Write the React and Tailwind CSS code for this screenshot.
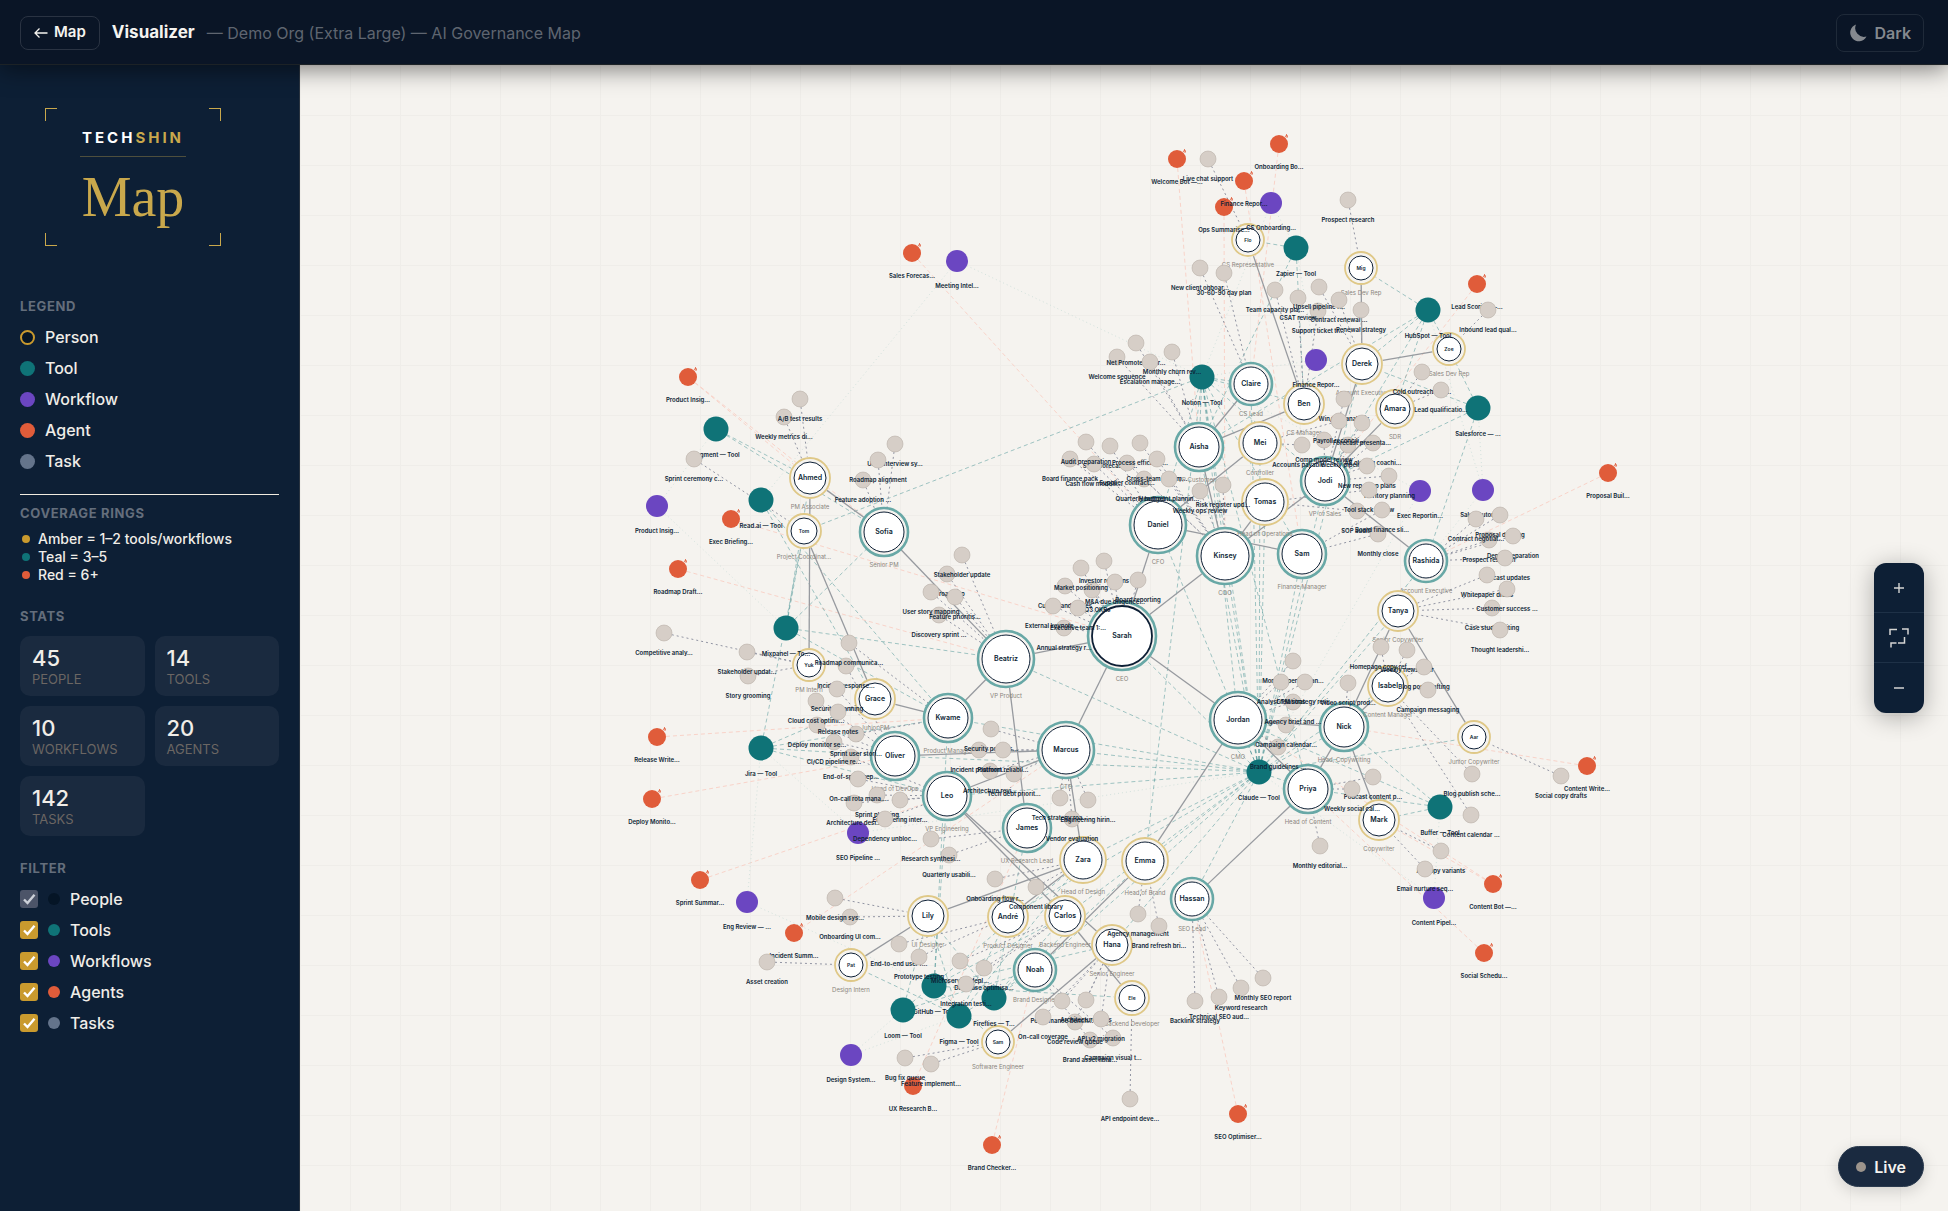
import { useState } from 'react';

// [id, label, role, x, y, radius, ring]
const PEOPLE = [
  ['sarah', 'Sarah', 'CEO', 1122, 636, 30, 'teal'],
  ['daniel', 'Daniel', 'CFO', 1158, 525, 24, 'teal'],
  ['kinsey', 'Kinsey', 'COO', 1225, 556, 24, 'teal'],
  ['marcus', 'Marcus', 'CTO', 1066, 750, 24, 'teal'],
  ['jordan', 'Jordan', 'CMO', 1238, 720, 24, 'teal'],
  ['beatriz', 'Beatriz', 'VP Product', 1006, 659, 24, 'teal'],
  ['aisha', 'Aisha', 'VP Customer…', 1199, 447, 20, 'teal'],
  ['jodi', 'Jodi', 'VP of Sales', 1325, 481, 20, 'teal'],
  ['sam', 'Sam', 'Finance Manager', 1302, 554, 20, 'teal'],
  ['sofia', 'Sofia', 'Senior PM', 884, 532, 20, 'teal'],
  ['kwame', 'Kwame', 'Product Manager', 948, 718, 20, 'teal'],
  ['oliver', 'Oliver', 'Head of DevOps', 895, 756, 20, 'teal'],
  ['leo', 'Leo', 'VP Engineering', 947, 796, 20, 'teal'],
  ['james', 'James', 'UX Research Lead', 1027, 828, 20, 'teal'],
  ['nick', 'Nick', 'Head, Copywriting', 1344, 727, 20, 'teal'],
  ['priya', 'Priya', 'Head of Content', 1308, 789, 20, 'teal'],
  ['claire', 'Claire', 'CS Lead', 1251, 384, 17, 'teal'],
  ['rashida', 'Rashida', 'Account Executive', 1426, 561, 17, 'teal'],
  ['hassan', 'Hassan', 'SEO Lead', 1192, 899, 17, 'teal'],
  ['noah', 'Noah', 'Brand Designer', 1035, 970, 17, 'teal'],
  ['tomas', 'Tomas', 'Head of Operations', 1265, 502, 19, 'amber'],
  ['zara', 'Zara', 'Head of Design', 1083, 860, 19, 'amber'],
  ['emma', 'Emma', 'Head of Brand', 1145, 861, 19, 'amber'],
  ['mei', 'Mei', 'Controller', 1260, 443, 17, 'amber'],
  ['ben', 'Ben', 'CS Manager', 1304, 404, 16, 'amber'],
  ['derek', 'Derek', 'Account Executive', 1362, 364, 16, 'amber'],
  ['amara', 'Amara', 'SDR', 1395, 409, 15, 'amber'],
  ['tanya', 'Tanya', 'Senior Copywriter', 1398, 611, 16, 'amber'],
  ['isabel', 'Isabel', 'Content Manager', 1388, 686, 16, 'amber'],
  ['mark', 'Mark', 'Copywriter', 1379, 820, 16, 'amber'],
  ['ahmed', 'Ahmed', 'PM Associate', 810, 478, 16, 'amber'],
  ['grace', 'Grace', 'Junior PM', 875, 699, 16, 'amber'],
  ['lily', 'Lily', 'UI Designer', 928, 916, 16, 'amber'],
  ['andre', 'André', 'Product Designer', 1008, 917, 16, 'amber'],
  ['carlos', 'Carlos', 'Backend Engineer', 1065, 916, 16, 'amber'],
  ['hana', 'Hana', 'Senior Engineer', 1112, 945, 16, 'amber'],
  ['tom', 'Tom', 'Project Coordinat…', 804, 531, 13, 'amber'],
  ['ele', 'Ele', 'Backend Developer', 1132, 998, 13, 'amber'],
  ['flo', 'Flo', 'CS Representative', 1248, 240, 12, 'amber'],
  ['mig', 'Mig', 'Sales Dev Rep', 1361, 268, 12, 'amber'],
  ['zoe', 'Zoe', 'Sales Dev Rep', 1449, 349, 12, 'amber'],
  ['yuki', 'Yuk', 'PM Intern', 809, 665, 12, 'amber'],
  ['aar', 'Aar', 'Junior Copywriter', 1474, 737, 12, 'amber'],
  ['sam2', 'Sam', 'Software Engineer', 998, 1042, 12, 'amber'],
  ['pat', 'Pat', 'Design Intern', 851, 965, 12, 'amber'],
];

// [id, label, x, y, linked nodes]
const TOOLS = [
  ['zapier', 'Zapier — Tool', 1296, 248, 'flo ben aisha'],
  ['notion', 'Notion — Tool', 1202, 377, 'claire aisha tom kinsey jordan daniel emma priya sam claude ben jodi'],
  ['hubspot', 'HubSpot — Tool', 1428, 310, 'mig derek zoe amara jodi aisha'],
  ['salesforce', 'Salesforce — …', 1478, 408, 'derek jodi rashida zoe'],
  ['segment', 'Segment — Tool', 716, 429, 'ahmed sofia'],
  ['readai', 'Read.ai — Tool', 761, 500, 'grace kwame'],
  ['mixpanel', 'Mixpanel — To…', 786, 628, 'ahmed tom sofia beatriz kwame'],
  ['jira', 'Jira — Tool', 761, 748, 'tom grace kwame oliver leo'],
  [
    'claude', 'Claude — Tool', 1259, 772,
    'aisha claire mei tomas kinsey sam jodi daniel sarah beatriz marcus oliver kwame leo zara emma hassan priya nick isabel tanya jordan hana andre carlos noah aar derek rashida',
  ],
  ['buffer', 'Buffer — Tool', 1440, 807, 'priya mark nick jordan'],
  ['github', 'GitHub — Tool', 934, 986, 'carlos hana leo sam2 ele kwame'],
  ['loom', 'Loom — Tool', 903, 1010, 'lily zara noah'],
  ['figma', 'Figma — Tool', 959, 1016, 'pat lily andre noah zara'],
  ['fireflies', 'Fireflies — T…', 994, 998, 'noah emma lily james carlos'],
];

const WORKFLOWS = [
  ['w1', 'CS Onboarding…', 1271, 203, 'zapier notion'],
  ['w2', 'Finance Repor…', 1316, 360, 'notion zapier'],
  ['w3', 'Exec Reportin…', 1420, 491, 'claude notion'],
  ['w4', 'Sales Automa…', 1483, 490, 'salesforce hubspot claude'],
  ['w5', 'Product Insig…', 657, 506, 'segment mixpanel'],
  ['w6', 'SEO Pipeline …', 858, 833, 'claude jira'],
  ['w7', 'Eng Review — …', 747, 902, 'jira github'],
  ['w8', 'Content Pipel…', 1434, 898, 'buffer claude'],
  ['w9', 'Design System…', 851, 1055, 'loom figma'],
  ['w10', 'Meeting Intel…', 957, 261, 'readai notion'],
];

const AGENTS = [
  ['a1', 'Welcome Bot —…', 1177, 159, 'aisha'],
  ['a2', 'Onboarding Bo…', 1279, 144, 'claire'],
  ['a4', 'Ops Summarise…', 1224, 207, 'kinsey'],
  ['a3', 'Finance Repor…', 1244, 181, 'sam'],
  ['a5', 'Lead Scoring —…', 1477, 284, 'jodi'],
  ['a6', 'Sales Forecas…', 912, 253, 'daniel'],
  ['a7', 'Product Insig…', 688, 377, 'ahmed sofia'],
  ['a8', 'Exec Briefing…', 731, 519, 'sarah'],
  ['a9', 'Roadmap Draft…', 678, 569, 'beatriz'],
  ['a10', 'Release Write…', 657, 737, 'kwame'],
  ['a11', 'Deploy Monito…', 652, 799, 'oliver'],
  ['a12', 'Sprint Summar…', 700, 880, 'leo'],
  ['a13', 'Incident Summ…', 794, 933, 'marcus'],
  ['a14', 'UX Research B…', 913, 1086, 'james'],
  ['a15', 'Brand Checker…', 992, 1145, 'noah'],
  ['a16', 'SEO Optimiser…', 1238, 1114, 'hassan'],
  ['a17', 'Proposal Buil…', 1608, 473, 'rashida'],
  ['a18', 'Content Write…', 1587, 766, 'nick'],
  ['a19', 'Content Bot —…', 1493, 884, 'mark jordan'],
  ['a20', 'Social Schedu…', 1484, 953, 'priya'],
];

// grouped by owner, later ones are painted on top
const TASKS = {
  flo: [['Live chat support', 1208, 159]],
  mig: [['Prospect research', 1348, 200]],
  claire: [['New client onboar…', 1200, 268], ['30-60-90 day plan', 1224, 273]],
  ben: [['Team capacity pla…', 1275, 290], ['Support ticket tr…', 1318, 311], ['CSAT review', 1298, 298]],
  derek: [['Upsell pipeline r…', 1319, 287], ['Contract renewal …', 1339, 300], ['Renewal strategy', 1361, 310]],
  zoe: [['Inbound lead qual…', 1488, 310]],
  aisha: [
    ['Welcome sequence', 1117, 357], ['Net Promoter Scor…', 1136, 343],
    ['Escalation manage…', 1150, 362], ['Monthly churn rev…', 1172, 352],
  ],
  amara: [['Cold outreach seq…', 1422, 372], ['Lead qualificatio…', 1441, 390]],
  jodi: [
    ['Win/loss analysis', 1344, 399], ['Comp model review', 1324, 440],
    ['Weekly pipeline r…', 1348, 445], ['AE closing coachi…', 1373, 443],
    ['Forecast presenta…', 1362, 423], ['New rep ramp plans', 1367, 466],
    ['Territory planning', 1389, 476],
  ],
  mei: [['Accounts payable …', 1302, 445], ['Payroll reconcili…', 1339, 421]],
  tomas: [['SOP audits', 1357, 511], ['Tool stack review', 1369, 490]],
  sam: [['Monthly close', 1378, 534], ['Board finance sli…', 1382, 510]],
  rashida: [
    ['Prospect research', 1489, 540], ['Contract negotiat…', 1476, 519],
    ['Proposal drafting', 1500, 515], ['Demo preparation', 1513, 536],
    ['Forecast updates', 1505, 558],
  ],
  tanya: [
    ['Whitepaper drafts', 1487, 575], ['Case study writing', 1492, 608],
    ['Customer success …', 1507, 589], ['Thought leadershi…', 1500, 630],
  ],
  isabel: [
    ['Homepage copy ref…', 1381, 647], ['Weekly newsletter', 1407, 650],
    ['Blog post drafting', 1424, 667], ['Campaign messaging', 1428, 690],
    ['Blog publish sche…', 1472, 774], ['Content calendar …', 1471, 815],
  ],
  daniel: [
    ['Board finance pack', 1070, 459], ['Sales forecast re…', 1110, 446],
    ['Cash flow modelli…', 1094, 464], ['Audit preparation', 1086, 442],
  ],
  kinsey: [
    ['Quarterly budget …', 1144, 479], ['Supplier contract…', 1127, 463],
    ['Process efficienc…', 1140, 443], ['Cross-team alignm…', 1157, 459],
    ['Headcount plannin…', 1169, 479], ['Weekly ops review', 1200, 491],
    ['Risk register upd…', 1223, 485],
  ],
  sarah: [
    ['Set Q3 OKRs', 1092, 590], ['Culture and values', 1065, 586],
    ['Annual strategy r…', 1064, 628], ['Executive team 1:…', 1078, 608],
    ['External keynote …', 1053, 606], ['Market positioning', 1081, 568],
    ['Investor relations', 1104, 561], ['M&A due diligence…', 1115, 582],
    ['Board reporting', 1138, 580],
  ],
  ahmed: [['Weekly metrics di…', 784, 417], ['A/B test results', 800, 399]],
  tom: [['Sprint ceremony c…', 694, 459]],
  sofia: [['Feature adoption …', 863, 480], ['User interview sy…', 895, 444], ['Roadmap alignment', 878, 460]],
  beatriz: [
    ['Q3 roadmap', 947, 574], ['Discovery sprint …', 939, 615],
    ['Feature prioritis…', 955, 597], ['User story mapping', 931, 592],
    ['Stakeholder update', 962, 555],
  ],
  yuki: [['Competitive analy…', 664, 633], ['Story grooming', 748, 676], ['Stakeholder updat…', 747, 652]],
  leo: [
    ['End-of-sprint rep…', 851, 757], ['Architecture desi…', 854, 803],
    ['Sprint planning', 877, 795], ['On-call rota mana…', 858, 779],
    ['Engineering inter…', 900, 800], ['Dependency unbloc…', 885, 819],
  ],
  oliver: [
    ['Incident response…', 846, 666], ['CI/CD pipeline re…', 834, 742],
    ['Deploy monitor se…', 817, 725], ['Cloud cost optimi…', 816, 701],
    ['Security scanning', 837, 689],
  ],
  kwame: [['Roadmap communica…', 849, 643], ['Sprint user stori…', 856, 734]],
  grace: [['Release notes', 838, 712]],
  marcus: [
    ['Architecture revi…', 990, 771], ['Tech debt priorit…', 1014, 774],
    ['Incident postmort…', 979, 750], ['Security policies…', 991, 729],
    ['Platform reliabil…', 1003, 750], ['Vendor evaluation', 1072, 819],
    ['Tech strategy roa…', 1060, 798], ['Engineering hirin…', 1088, 800],
  ],
  james: [['Quarterly usabili…', 949, 855], ['Research synthesi…', 931, 839]],
  zara: [['Onboarding flow r…', 995, 879], ['Component library', 1036, 887]],
  lily: [['Onboarding UI com…', 850, 917], ['Mobile design sys…', 835, 898]],
  pat: [['Asset creation', 767, 962]],
  andre: [['End-to-end user r…', 899, 944], ['Prototype testing', 919, 957]],
  carlos: [['Microservice depl…', 960, 961], ['Database optimisa…', 984, 968], ['Integration testi…', 966, 984]],
  noah: [['Brand asset libra…', 1090, 1040], ['Campaign visual t…', 1113, 1038]],
  hana: [
    ['Code review queue', 1075, 1022], ['Performance bench…', 1062, 1001],
    ['Architecture docs', 1086, 1000], ['On-call coverage', 1043, 1017],
    ['API v2 migration', 1101, 1019],
  ],
  sam2: [['Bug fix queue', 905, 1058], ['Feature implement…', 931, 1064]],
  ele: [['API endpoint deve…', 1130, 1099]],
  emma: [['Agency management', 1138, 914], ['Brand refresh bri…', 1159, 926]],
  hassan: [
    ['Backlink strategy', 1195, 1001], ['Technical SEO aud…', 1219, 997],
    ['Keyword research', 1241, 988], ['Monthly SEO report', 1263, 978],
  ],
  jordan: [
    ['Brand guidelines …', 1278, 747], ['Campaign calendar…', 1286, 725],
    ['Agency brief and …', 1293, 702], ['Monthly performan…', 1293, 661],
    ['Analyst relations', 1281, 682], ['GTM strategy revi…', 1305, 682],
  ],
  nick: [['Video script prod…', 1348, 683]],
  priya: [['Podcast content p…', 1373, 777], ['Weekly social cal…', 1352, 789], ['Monthly editorial…', 1320, 846]],
  aar: [['Social copy drafts', 1561, 776]],
  mark: [['Ad copy variants', 1441, 851], ['Email nurture seq…', 1425, 869]],
};

const REPORTS = {
  sarah: 'daniel kinsey beatriz marcus jordan',
  daniel: 'mei sam',
  kinsey: 'aisha tomas jodi',
  aisha: 'claire ben',
  ben: 'flo',
  jodi: 'derek amara rashida',
  derek: 'mig zoe',
  beatriz: 'sofia kwame james',
  sofia: 'ahmed',
  ahmed: 'yuki',
  tom: 'grace',
  kwame: 'grace',
  marcus: 'oliver leo zara',
  zara: 'lily andre',
  leo: 'carlos hana',
  carlos: 'ele',
  hana: 'sam2',
  lily: 'pat',
  jordan: 'nick priya emma',
  nick: 'tanya isabel mark priya',
  tanya: 'aar',
  priya: 'hassan',
  emma: 'noah',
};

const POS = {};
PEOPLE.forEach(([id, , , x, y, r]) => { POS[id] = { x, y, r: r + 5 }; });
TOOLS.forEach(([id, , x, y]) => { POS[id] = { x, y, r: 12 }; });

// trims a line so it starts and stops at the rim of each node
function Edge({ a, b, ...rest }) {
  const dx = b.x - a.x;
  const dy = b.y - a.y;
  const len = Math.hypot(dx, dy) || 1;
  return (
    <line
      x1={a.x + (dx / len) * a.r}
      y1={a.y + (dy / len) * a.r}
      x2={b.x - (dx / len) * b.r}
      y2={b.y - (dy / len) * b.r}
      {...rest}
    />
  );
}

function Links({ list, r, ...rest }) {
  return list.map(([id, , x, y, to]) =>
    to.split(' ').map((t) => <Edge key={id + t} a={{ x, y, r }} b={POS[t]} {...rest} />)
  );
}

function Graph({ show }) {
  return (
    <svg
      className="absolute inset-0 size-full font-[Inter,sans-serif]"
      viewBox="300 65 1648 1146"
      textAnchor="middle"
      role="img"
      aria-label="AI governance map"
    >
      {show.Agents && <Links list={AGENTS} r={9} stroke="#f9d3c9" strokeDasharray="4 3" />}
      {show.Workflows && <Links list={WORKFLOWS} r={11} stroke="#d3e2dd" strokeDasharray="1 3" />}
      {show.Tools && <Links list={TOOLS} r={12} stroke="#0f7377" strokeOpacity="0.38" strokeDasharray="4 3" />}
      {show.Tasks &&
        Object.entries(TASKS).map(([owner, list]) =>
          list.map(([label, x, y]) => (
            <Edge key={label + x} a={{ x, y, r: 8 }} b={POS[owner]} stroke="#9295a3" strokeDasharray="2 3" />
          ))
        )}
      {Object.entries(REPORTS).map(([boss, list]) =>
        list.split(' ').map((id) => (
          <Edge key={boss + id} a={POS[boss]} b={POS[id]} stroke="#979a9f" strokeWidth="1.3" />
        ))
      )}

      {PEOPLE.map(([id, name, role, x, y, r, ring]) => (
        <g key={id}>
          <circle
            cx={x}
            cy={y}
            r={r + 4}
            fill="#f5f3ef"
            stroke={ring === 'teal' ? '#68a8a6' : '#dfc887'}
            strokeWidth={ring === 'teal' ? 2.6 : 1.8}
          />
          <circle cx={x} cy={y} r={r} fill="#fff" stroke="#0d1f35" strokeWidth={id === 'sarah' ? 1.8 : 1} />
          <text x={x} y={y + 2} className={r < 14 ? 'text-[5px] font-semibold' : 'text-[7px] font-semibold'} fill="#0d1f35">
            {name}
          </text>
          <text x={x} y={y + r + 15} className="text-[6px]" fill="#8a857d">{role}</text>
        </g>
      ))}
      {show.Tools && TOOLS.map(([id, label, x, y]) => (
        <g key={id}>
          <circle cx={x} cy={y} r="12.5" fill="#0f7377" />
          <text x={x} y={y + 28} className="text-[6px] font-semibold" fill="#0d1f35">{label}</text>
        </g>
      ))}
      {show.Workflows && WORKFLOWS.map(([id, label, x, y]) => (
        <g key={id}>
          <circle cx={x} cy={y} r="11" fill="#6b46c1" />
          <text x={x} y={y + 27} className="text-[6px] font-semibold" fill="#0d1f35">{label}</text>
        </g>
      ))}
      {show.Agents && AGENTS.map(([id, label, x, y]) => (
        <g key={id}>
          <circle cx={x} cy={y} r="9" fill="#e05c3a" />
          <path d={`M${x + 6} ${y - 7}l1.5 -2l1 2M${x + 7} ${y - 10}l1 1l0 3`} fill="none" stroke="#e05c3a" strokeWidth="0.8" />
          <text x={x} y={y + 25} className="text-[6px] font-semibold" fill="#0d1f35">{label}</text>
        </g>
      ))}
      {show.Tasks && Object.values(TASKS).flat().map(([label, x, y]) => (
        <g key={label + x}>
          <circle cx={x} cy={y} r="8" fill="#d6cec7" stroke="#b8b0a8" strokeWidth="0.6" />
          <text x={x} y={y + 22} className="text-[6px] font-semibold" fill="#0d1f35">{label}</text>
        </g>
      ))}
    </svg>
  );
}

const LEGEND = [
  ['Person', 'bg-[#051526] border-2 border-[#c99a2e]'],
  ['Tool', 'bg-[#0f7377]'],
  ['Workflow', 'bg-[#6b46c1]'],
  ['Agent', 'bg-[#e05c3a]'],
  ['Task', 'bg-[#64748b]'],
];

const RINGS = [
  ['Amber = 1–2 tools/workflows', 'bg-[#c99a2e]'],
  ['Teal = 3–5', 'bg-[#0f7377]'],
  ['Red = 6+', 'bg-[#e05c3a]'],
];

const STATS = [
  [45, 'People'],
  [14, 'Tools'],
  [10, 'Workflows'],
  [20, 'Agents'],
  [142, 'Tasks'],
];

const FILTERS = [
  ['People', 'bg-[#051526]'],
  ['Tools', 'bg-[#0f7377]'],
  ['Workflows', 'bg-[#6b46c1]'],
  ['Agents', 'bg-[#e05c3a]'],
  ['Tasks', 'bg-[#64748b]'],
];

function Heading({ children }) {
  return <h2 className="text-[13px] leading-5 font-bold tracking-wider text-[#646e7c] uppercase">{children}</h2>;
}

function Logo() {
  return (
    <div className="relative ml-[25px] flex h-[138px] w-44 flex-col items-center">
      <span className="absolute top-0 left-0 h-[13px] w-3 border-t border-l border-[#c9a84c]" />
      <span className="absolute top-0 right-0 h-[13px] w-3 border-t border-r border-[#c9a84c]" />
      <span className="absolute bottom-0 left-0 h-[13px] w-3 border-b border-l border-[#c9a84c]" />
      <span className="absolute right-0 bottom-0 h-[13px] w-3 border-r border-b border-[#c9a84c]" />
      <div className="mt-5 w-[106px] border-b border-[#c9a84c]/35 pb-2 text-center text-[15px] leading-5 font-bold tracking-[3px] text-white">
        TECH<span className="text-[#c9a84c]">SHIN</span>
      </div>
      <div className="mt-2 font-['Liberation_Serif',serif] text-[56px] leading-[64px] text-[#c9a84c]">Map</div>
    </div>
  );
}

function Sidebar({ show, toggle }) {
  return (
    <aside className="w-[300px] shrink-0 border-r border-[#2a3440] bg-[#0d1f35] px-5 pt-[43px] text-[#f0ede8]">
      <Logo />

      <section className="mt-[50px]">
        <Heading>Legend</Heading>
        <ul className="mt-[11px] flex flex-col gap-[11px] text-base leading-5 font-medium">
          {LEGEND.map(([label, dot]) => (
            <li key={label} className="flex items-center gap-2.5">
              <span className={`size-[15px] rounded-full ${dot}`} />
              {label}
            </li>
          ))}
        </ul>
      </section>

      <section className="mt-[23px] border-t border-[#f0ebe0] pt-2">
        <Heading>Coverage Rings</Heading>
        <ul className="mt-[7px] text-sm leading-[18px] font-medium">
          {RINGS.map(([label, dot]) => (
            <li key={label} className="flex items-center gap-2 pl-0.5">
              <span className={`size-2 rounded-full ${dot}`} />
              {label}
            </li>
          ))}
        </ul>
      </section>

      <section className="mt-[22px]">
        <Heading>Stats</Heading>
        <dl className="mt-2.5 grid grid-cols-2 gap-2.5">
          {STATS.map(([value, label]) => (
            <div key={label} className="flex h-[60px] flex-col-reverse justify-end rounded-[10px] bg-[#1a2a3f] px-3 pt-2.5">
              <dt className="text-[13px] leading-[18px] text-[#6b6663] uppercase">{label}</dt>
              <dd className="text-[22px] leading-6 font-medium">{value}</dd>
            </div>
          ))}
        </dl>
      </section>

      <section className="mt-[22px]">
        <Heading>Filter</Heading>
        <ul className="mt-[11px] flex flex-col gap-[11px] text-base leading-5 font-medium">
          {FILTERS.map(([label, dot]) => (
            <li key={label}>
              <label className="flex items-center">
                <span className="grid">
                  <input
                    type="checkbox"
                    checked={show[label]}
                    disabled={label === 'People'}
                    onChange={() => toggle(label)}
                    className="size-[18px] appearance-none rounded-[3px] border border-[#767676] [grid-area:1/1] checked:border-transparent checked:bg-[#c99a2e] disabled:checked:bg-[#4c5468]"
                  />
                  {show[label] && (
                    <svg
                      viewBox="0 0 18 18"
                      className={`pointer-events-none size-[18px] [grid-area:1/1] ${label === 'People' ? 'text-[#ccd0d8]' : 'text-white'}`}
                      fill="none"
                      stroke="currentColor"
                      strokeWidth="2.4"
                    >
                      <path d="M4 9.5L7.5 13L14.5 4.8" />
                    </svg>
                  )}
                </span>
                <span className={`mr-2.5 ml-2.5 size-3 rounded-full ${dot}`} />
                {label}
              </label>
            </li>
          ))}
        </ul>
      </section>
    </aside>
  );
}

export default function App() {
  const [show, setShow] = useState({ People: true, Tools: true, Workflows: true, Agents: true, Tasks: true });
  const toggle = (key) => setShow((s) => ({ ...s, [key]: !s[key] }));

  return (
    <div className="flex min-h-screen flex-col bg-[#f5f3ef] font-[Inter,sans-serif]">
      <header className="relative z-10 flex h-[65px] items-center border-b border-[#1c2226] bg-[#0a1526] pt-px pr-6 pl-5 shadow-[0_4px_24px_rgba(0,0,0,0.5)]">
        <a href="#map" className="flex h-[34px] items-center gap-1.5 rounded-lg border border-[#2a3342] px-[13px] text-[15px] font-semibold text-[#f5f3ef]">
          <svg viewBox="0 0 14 12" className="h-3 w-3.5" fill="none" stroke="currentColor" strokeWidth="1.3">
            <path d="M13.5 6H1M5.5 1.5L1 6L5.5 10.5" />
          </svg>
          Map
        </a>
        <h1 className="ml-3 text-[17px] font-bold text-[#f5f3ef]">Visualizer</h1>
        <p className="ml-3 text-base text-[#5f6570]">— Demo Org (Extra Large) — AI Governance Map</p>
        <button type="button" className="ml-auto flex h-[38px] items-center gap-2 rounded-lg border border-[#1f2a39] px-3 text-base font-semibold text-[#85898f]">
          <svg viewBox="0 0 18 18" className="size-[18px]" fill="currentColor">
            <path d="M7 0.5A8.6 8.6 0 1 0 17.5 12.5A8.8 8.8 0 0 1 7 0.5Z" />
          </svg>
          Dark
        </button>
      </header>

      <div className="flex flex-1">
        <Sidebar show={show} toggle={toggle} />
        <main className="relative flex-1 overflow-hidden bg-[linear-gradient(#efede9_1px,transparent_1px),linear-gradient(90deg,#efede9_1px,transparent_1px)] bg-[size:50px_50px]">
          <Graph show={show} />

          <div className="absolute top-1/2 right-6 flex -translate-y-1/2 flex-col divide-y divide-[#1e3147] overflow-hidden rounded-xl bg-[#0d1f35] text-[#d5d5d3] shadow-[0_4px_24px_rgba(0,0,0,0.3)]">
            <button type="button" aria-label="Zoom in" className="grid size-[50px] place-items-center">
              <svg viewBox="0 0 10 10" className="size-2.5" stroke="currentColor" strokeWidth="1.4">
                <path d="M5 0V10M0 5H10" />
              </svg>
            </button>
            <button type="button" aria-label="Fit to screen" className="grid size-[50px] place-items-center">
              <svg viewBox="0 0 20 20" className="size-5" fill="none" stroke="currentColor" strokeWidth="1.5">
                <path d="M1 7V1.5H8M13 1H19V6.5M15.5 9V15H9M7.5 15H2V19.5" />
              </svg>
            </button>
            <button type="button" aria-label="Zoom out" className="grid size-[50px] place-items-center">
              <svg viewBox="0 0 10 10" className="size-2.5" stroke="currentColor" strokeWidth="1.4">
                <path d="M0 5H10" />
              </svg>
            </button>
          </div>

          <button type="button" className="absolute right-6 bottom-6 flex h-[41px] items-center gap-2 rounded-full border border-[#2a3a4e] bg-[#1a2a40] px-[17px] text-base font-semibold text-[#f5f3ef] shadow-[0_4px_16px_rgba(0,0,0,0.15)]">
            <span className="size-2.5 rounded-full bg-[#9c948c]" />
            Live
          </button>
        </main>
      </div>
    </div>
  );
}
